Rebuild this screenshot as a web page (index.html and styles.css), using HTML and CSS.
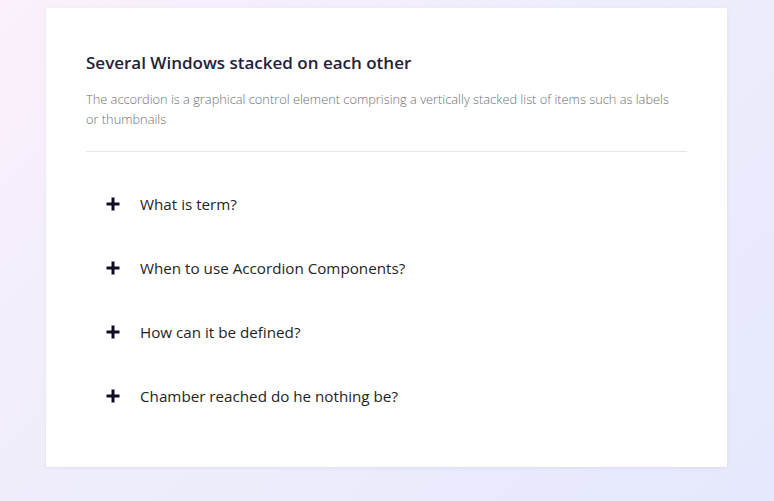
FILE: index.html
```html
<!DOCTYPE html>
<html lang="en">
<head>
    <meta charset="UTF-8">
    <meta name="viewport" content="width=device-width, initial-scale=1.0">
    <title>Accordion</title>
    <link rel="stylesheet" href="styles.css">
</head>
<body>
    <div class="card">
        <div class="card-header">
            <h2 class="card-title">Several Windows stacked on each other</h2>
            <p class="card-text">The accordion is a graphical control element comprising a vertically stacked list of items such as labels or thumbnails</p>
        </div>
        <div class="accordion">
            <div class="accordion-item">
                <svg class="plus" width="14" height="14" viewBox="0 0 14 14"><path d="M7 0.5v13M0.5 7h13" stroke="#0f0c24" stroke-width="3"/></svg>
                <span>What is term?</span>
            </div>
            <div class="accordion-item">
                <svg class="plus" width="14" height="14" viewBox="0 0 14 14"><path d="M7 0.5v13M0.5 7h13" stroke="#0f0c24" stroke-width="3"/></svg>
                <span>When to use Accordion Components?</span>
            </div>
            <div class="accordion-item">
                <svg class="plus" width="14" height="14" viewBox="0 0 14 14"><path d="M7 0.5v13M0.5 7h13" stroke="#0f0c24" stroke-width="3"/></svg>
                <span>How can it be defined?</span>
            </div>
            <div class="accordion-item">
                <svg class="plus" width="14" height="14" viewBox="0 0 14 14"><path d="M7 0.5v13M0.5 7h13" stroke="#0f0c24" stroke-width="3"/></svg>
                <span>Chamber reached do he nothing be?</span>
            </div>
        </div>
    </div>
</body>
</html>
```

FILE: styles.css
```css
body {
    font-family: "Open Sans", sans-serif;
    background: linear-gradient(135deg, #fbf0fb 0%, #ededfb 50%, #e6e8fd 100%);
    margin: 0;
    height: 501px;
    padding: 8px 0 0 46px;
    box-sizing: border-box;
}
.card {
    width: 681px;
    height: 459px;
    box-sizing: border-box;
    background-color: #fff;
    box-shadow: 0 1px 3px rgba(60, 50, 120, 0.08);
    padding: 43px 40px 0 40px;
}
.card-header {
    padding-bottom: 22px;
    border-bottom: 1px solid #e6e6ea;
}
.card-title {
    margin: 0;
    font-size: 17px;
    font-weight: 600;
    color: #24213a;
    line-height: 24px;
}
.card-text {
    margin: 14px 0 0 0;
    max-width: 590px;
    font-size: 12.8px;
    line-height: 20px;
    color: #6f6f78;
    font-weight: 300;
}
.accordion {
    padding: 20px 0 0 20px;
}
.accordion-item {
    display: flex;
    align-items: center;
    height: 64px;
    font-size: 15.2px;
    color: #1f1f24;
}
.plus {
    margin-right: 20px;
    flex-shrink: 0;
}
```
